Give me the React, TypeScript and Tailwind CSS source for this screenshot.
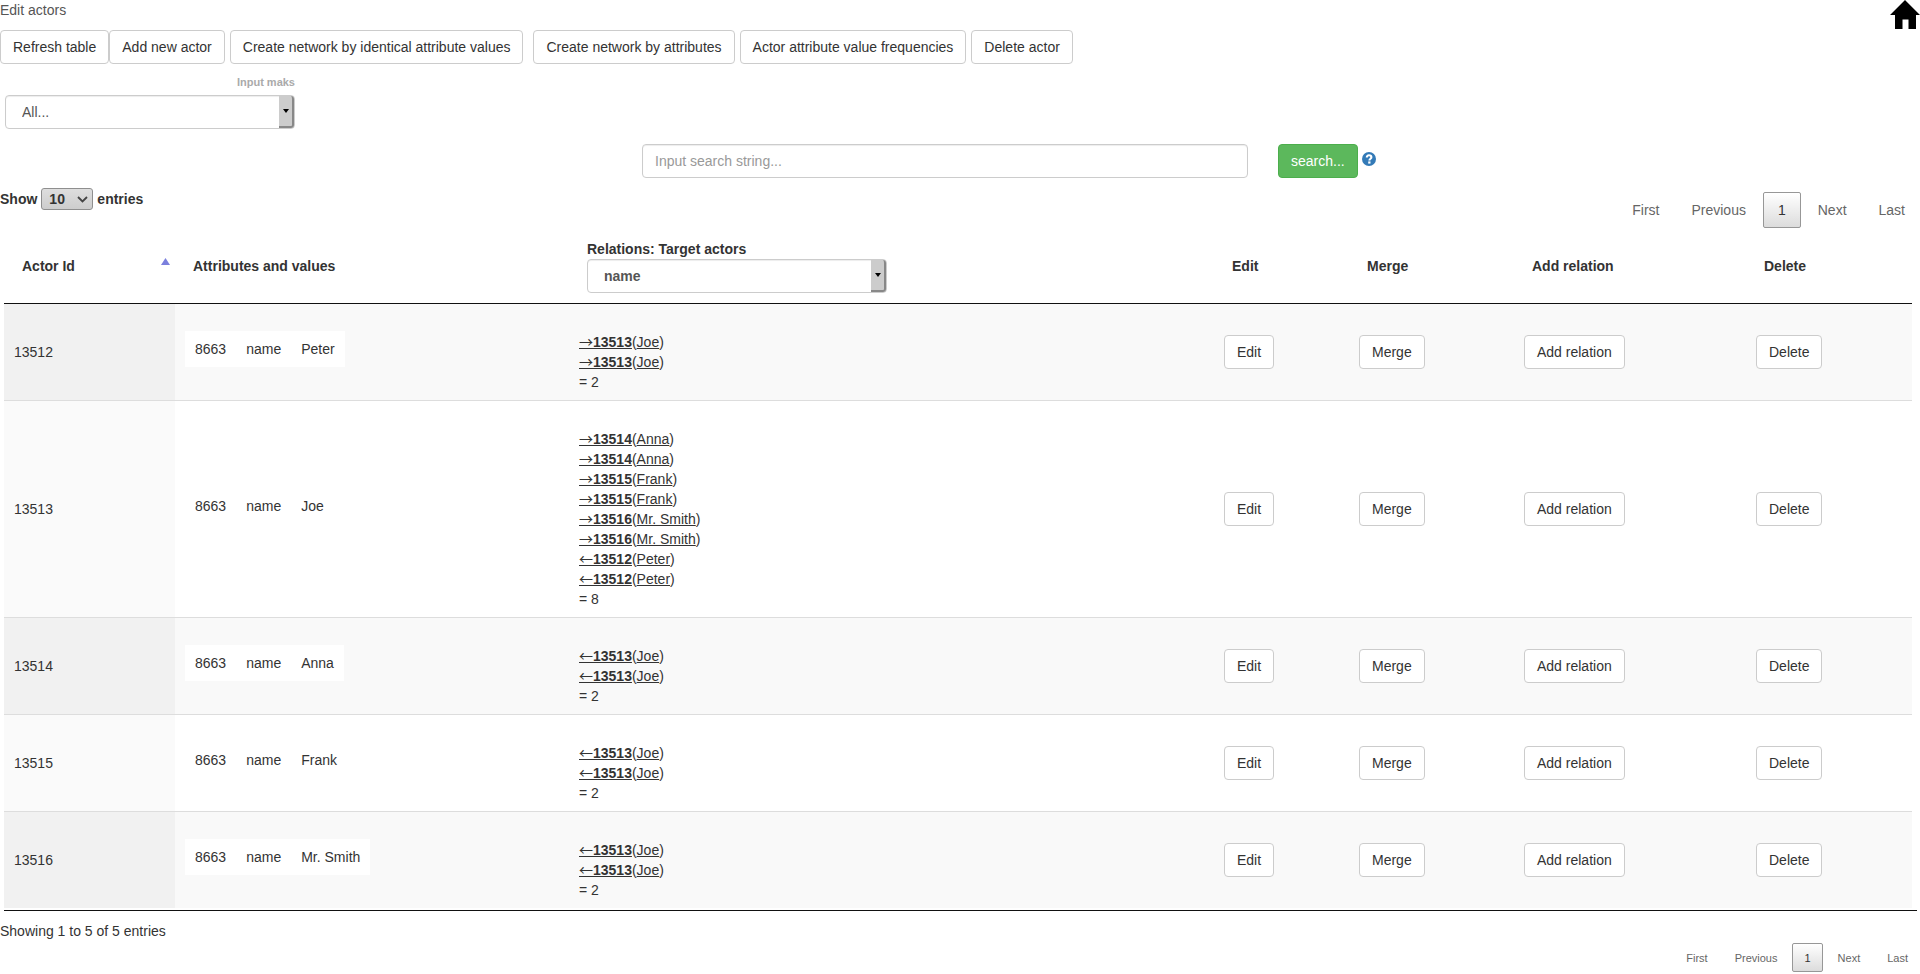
import { useState } from "react";

type Relation = { dir: "out" | "in"; id: string; name: string };
type Actor = { id: string; attributeId: string; attribute: string; value: string; relations: Relation[] };

const twice = (dir: Relation["dir"], id: string, name: string): Relation[] => [
  { dir, id, name },
  { dir, id, name },
];

const actors: Actor[] = [
  { id: "13512", attributeId: "8663", attribute: "name", value: "Peter", relations: twice("out", "13513", "Joe") },
  {
    id: "13513",
    attributeId: "8663",
    attribute: "name",
    value: "Joe",
    relations: [
      ...twice("out", "13514", "Anna"),
      ...twice("out", "13515", "Frank"),
      ...twice("out", "13516", "Mr. Smith"),
      ...twice("in", "13512", "Peter"),
    ],
  },
  { id: "13514", attributeId: "8663", attribute: "name", value: "Anna", relations: twice("in", "13513", "Joe") },
  { id: "13515", attributeId: "8663", attribute: "name", value: "Frank", relations: twice("in", "13513", "Joe") },
  { id: "13516", attributeId: "8663", attribute: "name", value: "Mr. Smith", relations: twice("in", "13513", "Joe") },
];

function Button({ children }: { children: string }) {
  return (
    <button
      type="button"
      className="h-[34px] cursor-pointer whitespace-nowrap rounded border border-[#ccc] bg-white px-3 text-[#333] hover:bg-[#e6e6e6]"
    >
      {children}
    </button>
  );
}

function ComboBox({ id, label, option, bold }: { id: string; label: string; option: string; bold?: boolean }) {
  return (
    <div className="relative">
      <select
        id={id}
        aria-label={label}
        className={`block h-[34px] w-full appearance-none rounded border border-[#ccc] bg-white pl-4 pr-5 text-[#555] shadow-[inset_0_1px_1px_rgba(0,0,0,0.075)] ${bold ? "font-bold" : "font-normal"}`}
      >
        <option>{option}</option>
      </select>
      <span className="pointer-events-none absolute inset-y-px right-px flex w-[15px] items-center justify-center rounded-r-[3px] border-b-2 border-r-2 border-[#888] bg-[#ccc]">
        <svg width="6" height="4" viewBox="0 0 6 4" aria-hidden="true">
          <path d="M0 0h6L3 4z" fill="#000" />
        </svg>
      </span>
    </div>
  );
}

function Pagination({ small }: { small?: boolean }) {
  const item = small ? "h-[29px] px-[11px]" : "h-9 px-[14px]";
  const link = `${item} cursor-pointer rounded-xs border border-transparent text-[#666]`;
  return (
    <nav aria-label="Table pages" className={`flex ${small ? "gap-[3px] text-[11px]" : "gap-0.5 text-sm"}`}>
      <button type="button" className={link}>First</button>
      <button type="button" className={link}>Previous</button>
      <button
        type="button"
        aria-current="page"
        className={`${item} cursor-pointer rounded-xs border border-[#979797] bg-linear-to-b from-white to-[#dcdcdc] text-[#333]`}
      >
        1
      </button>
      <button type="button" className={link}>Next</button>
      <button type="button" className={link}>Last</button>
    </nav>
  );
}

function RelationList({ relations }: { relations: Relation[] }) {
  return (
    <div className="pt-5">
      {relations.map((r, i) => (
        <div key={i} className="h-5">
          <a href={`#${r.id}`} className="underline">
            <span className="font-['Noto_Sans_CJK_JP',sans-serif] leading-none">{r.dir === "out" ? "→" : "←"}</span>
            <b>{r.id}</b>
          </a>
          (<a href={`#${r.id}`} className="underline">{r.name}</a>)
        </div>
      ))}
      <div>= {relations.length}</div>
    </div>
  );
}

export default function App() {
  const [query, setQuery] = useState("");
  return (
    <main className="bg-white font-['Liberation_Sans',Arial,sans-serif] text-sm leading-5 text-[#333]">
      <header className="flex h-[30px] justify-between">
        <h1 className="text-[#555]">Edit actors</h1>
        <a href="#home" aria-label="Home">
          <svg width="30" height="30" viewBox="0 0 30 30" aria-hidden="true">
            <path d="M15 0L30 15H26V29H18.500V19.500H12.500V29H5V15H0z" fill="#000" />
          </svg>
        </a>
      </header>

      <div className="flex">
        <Button>Refresh table</Button>
        <div className="flex gap-[5px]">
          <Button>Add new actor</Button>
          <Button>Create network by identical attribute values</Button>
        </div>
        <div className="ml-[10px] flex gap-[5px]">
          <Button>Create network by attributes</Button>
          <Button>Actor attribute value frequencies</Button>
          <Button>Delete actor</Button>
        </div>
      </div>

      <div className="ml-[5px] w-[290px] pt-2">
        <label htmlFor="mask" className="block pb-[3px] text-right text-[11px] font-bold text-[#aaa]">
          Input maks
        </label>
        <ComboBox id="mask" label="Input maks" option="All..." />
      </div>

      <div className="flex pt-[15px]">
        <div className="flex-1" />
        <input
          type="text"
          aria-label="Search string"
          placeholder="Input search string..."
          value={query}
          onChange={(e) => setQuery(e.target.value)}
          className="h-[34px] w-[606px] rounded border border-[#ccc] px-3 text-[#555] shadow-[inset_0_1px_1px_rgba(0,0,0,0.075)] placeholder:text-[#999]"
        />
        <div className="flex flex-1 items-center pl-[30px]">
          <button
            type="button"
            className="h-[34px] cursor-pointer rounded border border-[#4cae4c] bg-[#5cb85c] px-3 text-white"
          >
            search...
          </button>
          <a href="#help" aria-label="Search help" className="pb-1 pl-1">
            <svg width="14" height="14" viewBox="0 0 14 14" aria-hidden="true">
              <circle cx="7" cy="7" r="7" fill="#337ab7" />
              <path d="M4.800 5.600C4.800 4.100 5.600 3.300 7 3.300s2.400.8 2.400 2c0 1.500-2 1.400-2 3.200" fill="none" stroke="#fff" strokeWidth="2.100" />
              <path d="M6.200 9.400h2.300v2.200H6.200z" fill="#fff" />
            </svg>
          </a>
        </div>
      </div>

      <div className="flex items-start justify-between pb-px pt-[10px]">
        <label className="flex items-center gap-1 font-bold">
          Show
          <span className="relative">
            <select className="block h-[22px] w-[52px] appearance-none rounded-[3px] border border-[#8f8f8f] bg-linear-to-b from-[#dedede] to-[#cdcdcd] pl-[7px] font-bold text-[#333]">
              <option>10</option>
            </select>
            <svg
              className="pointer-events-none absolute right-[5px] top-[8px]"
              width="11"
              height="7"
              viewBox="0 0 11 7"
              aria-hidden="true"
            >
              <path d="M1 1l4.500 4.500L10 1" fill="none" stroke="#444" strokeWidth="1.800" />
            </svg>
          </span>
          entries
        </label>
        <div className="pt-1">
          <Pagination />
        </div>
      </div>

      <div className="ml-1 mr-[3px] border-b border-[#111] pb-0.5 pr-[5px]">
        <table className="w-full table-fixed border-collapse">
          <colgroup>
            <col className="w-[171px]" />
            <col className="w-[394px]" />
            <col />
            <col className="w-[135px]" />
            <col className="w-[165px]" />
            <col className="w-[232px]" />
            <col className="w-[166px]" />
          </colgroup>
          <thead>
            <tr className="border-b border-[#111] text-left [&>th]:px-[18px] [&>th]:py-[10px]">
              <th>
                <span className="relative block">
                  Actor Id
                  <svg
                    className="absolute -right-[13px] top-0.5"
                    width="9"
                    height="7"
                    viewBox="0 0 9 7"
                    aria-hidden="true"
                  >
                    <path d="M4.500 0L9 7H0z" fill="#7b80dd" />
                  </svg>
                </span>
              </th>
              <th>Attributes and values</th>
              <th>
                <label htmlFor="relation-attribute">Relations: Target actors</label>
                <div className="w-[300px]">
                  <ComboBox id="relation-attribute" label="Relations: Target actors" option="name" bold />
                </div>
              </th>
              <th>Edit</th>
              <th>Merge</th>
              <th>Add relation</th>
              <th>Delete</th>
            </tr>
          </thead>
          <tbody>
            {actors.map((a) => (
              <tr
                key={a.id}
                className="border-t border-[#ddd] first:border-t-0 odd:bg-[#f9f9f9] [&>td]:px-[10px] [&>td]:py-2 [&>td:first-child]:bg-[#fafafa] odd:[&>td:first-child]:bg-[#f1f1f1]"
              >
                <td>{a.id}</td>
                <td>
                  <div className="mb-1.5 flex w-fit gap-5 bg-white px-[10px] py-2">
                    <span>{a.attributeId}</span>
                    <span>{a.attribute}</span>
                    <span>{a.value}</span>
                  </div>
                </td>
                <td>
                  <RelationList relations={a.relations} />
                </td>
                <td><Button>Edit</Button></td>
                <td><Button>Merge</Button></td>
                <td><Button>Add relation</Button></td>
                <td><Button>Delete</Button></td>
              </tr>
            ))}
          </tbody>
        </table>
      </div>

      <footer className="flex items-start justify-between">
        <p className="pt-[10px]">Showing 1 to 5 of 5 entries</p>
        <div className="pt-8">
          <Pagination small />
        </div>
      </footer>
    </main>
  );
}
